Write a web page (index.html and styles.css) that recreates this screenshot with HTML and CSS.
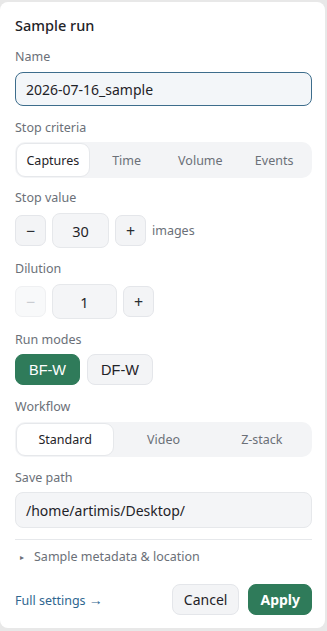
FILE: index.html
```html
<!DOCTYPE html>
<html lang="en">
  <head>
    <meta charset="UTF-8" />
    <meta name="viewport" content="width=device-width, initial-scale=1.0" />
    <title>Sample run</title>
    <link rel="stylesheet" href="styles.css">
  </head>
  <body>
    <div class="card">
      <h2 class="title">Sample run</h2>

      <div class="field name-field">
        <label>Name</label>
        <div class="text-input focus">2026-07-16_sample</div>
      </div>

      <div class="field tight">
        <label>Stop criteria</label>
        <div class="segmented">
          <span class="seg active">Captures</span>
          <span class="seg">Time</span>
          <span class="seg">Volume</span>
          <span class="seg">Events</span>
        </div>
      </div>

      <div class="field">
        <label>Stop value</label>
        <div class="stepper">
          <button class="step-btn">&minus;</button>
          <div class="step-value">30</div>
          <button class="step-btn">+</button>
          <span class="unit">images</span>
        </div>
      </div>

      <div class="field">
        <label>Dilution</label>
        <div class="stepper">
          <button class="step-btn disabled">&minus;</button>
          <div class="step-value wide">1</div>
          <button class="step-btn">+</button>
        </div>
      </div>

      <div class="field modes-field">
        <label>Run modes</label>
        <div class="pills">
          <button class="pill on">BF-W</button>
          <button class="pill">DF-W</button>
        </div>
      </div>

      <div class="field">
        <label>Workflow</label>
        <div class="segmented short">
          <span class="seg active">Standard</span>
          <span class="seg">Video</span>
          <span class="seg">Z-stack</span>
        </div>
      </div>

      <div class="field path-field">
        <label>Save path</label>
        <div class="text-input">/home/artimis/Desktop/</div>
      </div>

      <div class="divider"></div>

      <div class="disclosure">
        <span class="caret">&#9656;</span>
        <span>Sample metadata &amp; location</span>
      </div>

      <div class="footer">
        <a class="link" href="#">Full settings <span class="arrow">&rarr;</span></a>
        <div class="actions">
          <button class="btn cancel">Cancel</button>
          <button class="btn apply">Apply</button>
        </div>
      </div>
    </div>
  </body>
</html>
```

FILE: styles.css
```css
body {
  margin: 0;
  padding: 2px 2px 3px 0;
  background-color: #e8e8e8;
  font-family: "Noto Sans", "Open Sans", sans-serif;
  color: #1f2328;
}
.card {
  box-sizing: border-box;
  width: 325px;
  height: 626px;
  background-color: #ffffff;
  border-radius: 8px;
  padding: 13px 13px 13px 15px;
  display: flex;
  flex-direction: column;
}
.title {
  margin: 0 0 14px 0;
  font-size: 14.5px;
  font-weight: 500;
  line-height: 20px;
}
.field {
  display: flex;
  flex-direction: column;
  margin-bottom: 13px;
}
.field label {
  font-size: 12.5px;
  line-height: 16px;
  color: #6b7078;
  margin-bottom: 7px;
}
.name-field {
  margin-bottom: 14px;
}
.tight {
  margin-bottom: 12px;
}
.tight label,
.modes-field label,
.path-field label {
  margin-bottom: 6px;
}
.modes-field {
  margin-bottom: 14px;
}
.text-input {
  box-sizing: border-box;
  height: 36px;
  padding: 0 10px;
  display: flex;
  align-items: center;
  font-size: 14px;
  background-color: #f4f5f7;
  border: 1px solid #e6e8eb;
  border-radius: 8px;
}
.text-input.focus {
  height: 34px;
  background-color: #f3f6f9;
  border-color: #3d6d8c;
}
.segmented {
  box-sizing: border-box;
  height: 36px;
  display: flex;
  padding: 1px;
  background-color: #f3f4f6;
  border-radius: 10px;
}
.segmented.short {
  height: 35px;
}
.seg {
  flex: 1;
  display: flex;
  align-items: center;
  justify-content: center;
  font-size: 12.5px;
  color: #6b7078;
  border: 1px solid transparent;
  border-radius: 9px;
}
.seg.active {
  background-color: #ffffff;
  border-color: #e6e8eb;
  color: #1f2328;
}
.stepper {
  display: flex;
  align-items: center;
  gap: 6px;
  height: 35px;
}
.step-btn {
  box-sizing: border-box;
  width: 31px;
  height: 31px;
  padding: 0;
  font-family: inherit;
  font-size: 16px;
  color: #2a2e33;
  background-color: #f3f4f6;
  border: 1px solid #e4e6ea;
  border-radius: 7px;
}
.step-btn.disabled {
  color: #c9ccd1;
  background-color: #f8f9fa;
  border-color: #eff0f2;
}
.step-value {
  box-sizing: border-box;
  width: 57px;
  height: 35px;
  display: flex;
  align-items: center;
  justify-content: center;
  font-size: 14.5px;
  background-color: #f4f5f7;
  border: 1px solid #e6e8eb;
  border-radius: 8px;
}
.step-value.wide {
  width: 65px;
}
.unit {
  font-size: 12.5px;
  color: #6b7078;
}
.pills {
  display: flex;
  gap: 7px;
}
.pill {
  box-sizing: border-box;
  height: 31px;
  padding: 0 13px;
  font-family: "Liberation Sans", Arial, sans-serif;
  font-size: 14.5px;
  color: #1f2328;
  background-color: #f3f4f6;
  border: 1px solid #e4e6ea;
  border-radius: 8px;
}
.pill.on {
  color: #ffffff;
  background-color: #2f7b5a;
  border-color: #2f7b5a;
}
.divider {
  margin-top: -2px;
  border-top: 1px solid #e6e8eb;
}
.disclosure {
  display: flex;
  align-items: center;
  margin-top: 9px;
  font-size: 12.5px;
  line-height: 16px;
  color: #6b7078;
}
.caret {
  font-size: 8px;
  margin: 0 10px 0 5px;
}
.footer {
  margin-top: auto;
  display: flex;
  align-items: center;
  justify-content: space-between;
}
.link {
  font-size: 12.5px;
  color: #2f6690;
  text-decoration: none;
}
.arrow {
  font-size: 14px;
}
.actions {
  display: flex;
  gap: 9px;
}
.btn {
  box-sizing: border-box;
  height: 31px;
  padding: 0 11px;
  font-family: inherit;
  font-size: 14px;
  border-radius: 8px;
}
.cancel {
  color: #1f2328;
  background-color: #f3f4f6;
  border: 1px solid #e4e6ea;
}
.apply {
  font-weight: 700;
  color: #ffffff;
  background-color: #2f7b5a;
  border: 1px solid #2f7b5a;
}
```
